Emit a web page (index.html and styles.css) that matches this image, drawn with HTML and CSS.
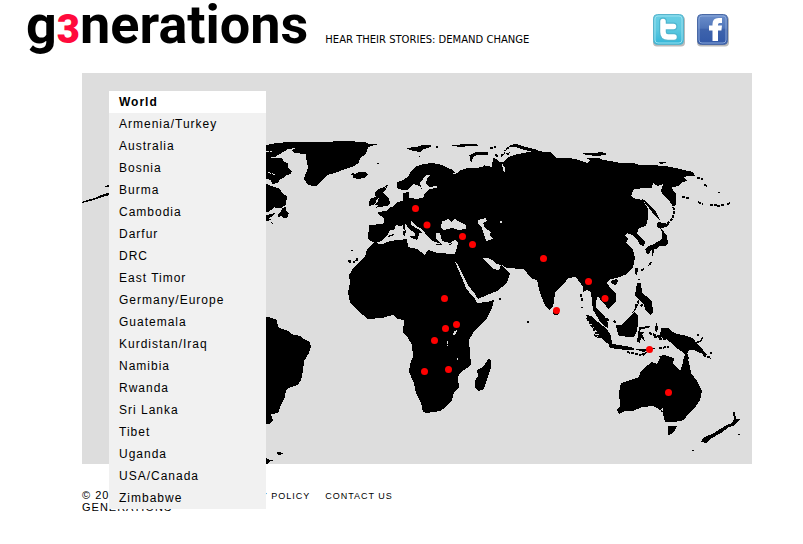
FILE: index.html
```html
<!DOCTYPE html>
<html lang="en">
<head>
<meta charset="utf-8">
<title>g3nerations</title>
<link rel="stylesheet" href="styles.css">
</head>
<body>
<header class="header">
  <h1 class="logo">g<span class="logo-accent">3</span>nerations</h1>
  <p class="tagline">HEAR THEIR STORIES: DEMAND CHANGE</p>
  <div class="social">
    <a href="#" aria-label="Twitter">
      <svg class="social-icon" viewBox="0 0 34 34">
        <defs>
          <linearGradient id="tw" x2="0" y2="1"><stop stop-color="#69cfe5"/><stop offset=".5" stop-color="#5cc9e0"/><stop offset="1" stop-color="#31b5d8"/></linearGradient>
        </defs>
        <rect x="1" y="3" width="32" height="30.500" rx="4" fill="#bbb"/>
        <rect x="1.500" y="1.500" width="30" height="30" rx="4" fill="url(#tw)" stroke="#58b4cc"/>
        <rect x="3" y="3" width="27" height="27" rx="3" fill="none" stroke="#9be0ee"/>
        <path d="M11 8.500v10.500q0 5 5 5h6M11 13.500h10.500" fill="none" stroke="#4fb6cf" stroke-width="8" stroke-linecap="round" stroke-linejoin="round"/>
        <path d="M11 8.500v10.500q0 5 5 5h6M11 13.500h10.500" fill="none" stroke="#fff" stroke-width="5.500" stroke-linecap="round" stroke-linejoin="round"/>
      </svg>
    </a>
    <a href="#" aria-label="Facebook">
      <svg class="social-icon" viewBox="0 0 34 34">
        <defs>
          <linearGradient id="fb" x2="0" y2="1"><stop stop-color="#6c8fcb"/><stop offset=".45" stop-color="#5075b9"/><stop offset=".5" stop-color="#3e63ac"/><stop offset="1" stop-color="#3259a8"/></linearGradient>
        </defs>
        <rect x="1" y="3" width="32" height="30.500" rx="4" fill="#bbb"/>
        <rect x="1.500" y="1.500" width="30" height="30" rx="4" fill="url(#fb)" stroke="#4a69a5"/>
        <rect x="3" y="3" width="27" height="27" rx="3" fill="none" stroke="#8ba8d9"/>
        <path d="M16.500 28V17.500H13V12.500h3.500V11Q16.500 5 22.500 5H26v5h-2.500q-1.500 0-1.500 1.500v1h4l-.6 5H22V28z" fill="#fff"/>
      </svg>
    </a>
  </div>
</header>

<main class="content">
  <svg class="map" viewBox="82 73 670 391" role="img" aria-label="World map">
    <g class="land">
      <!-- Aleutians, Canada and Greenland -->
      <path d="M82 202l8-3 5-1 6-3 9-3v3l-11 3-9 3-8 2zM104 186l6-1v2h-5z"/>
      <path d="M260 145L266 145 276 143 290 142 307 142.500 320 142 345 141 365 142 369 144 378 144 375 145 368 147 366 154 360 158 359 163 354 166 345 169 335 173 327 175 322 181 316 186.500 308 185 304 179 306 173 308 168 306 157 306 154 294 153 292 150 296 148 288 149 280 154 275 157 266 157 260 157z"/>
      <path d="M260 157L282 158 284 162 288 163 288 168 292 171 291 174 286 175 284 178 280 179 278 183 272 184 271 180 266 179 260 179z"/>
      <path d="M260 183L268 184 273 186 280 189 282 193 287 196 286 205 281 208 274 208 268 212 260 213z"/>
      <path d="M278 214l3-2 1-4 4-1 0 4 3 2-2 5-4 0-1-2-4 1zM266 215l9-2-3 4-4 1 4 2-6 1zM271 222l2 1-1 1z"/>
      <path d="M350 174l3-1 2 1 4-2 7 0 2 3-4 3-7 1-6-2 3-1zM377 163h2v1h-2z"/>
      <!-- South America -->
      <path d="M260 315L272 318 277 320 278 327 282 329 289 331 291 334 300 336 304 339 310 342 311 347 309 353 304 361 303 371 301 380 298 385 291 387 286 390 285 397 281 405 278 413 271 414 273 420 270 424 260 424zM276 453l3-1.500 4 2-4 1.800zM260 458l6 0 3 1.500 6 .5-4 1-3 2.500-8 0z"/>
      <!-- Europe, Asia and Africa -->
      <path d="M397 187L397 182 403 180 408 177 411 171 415 167 423 164 433 163 442 165 446 167 453 170 455 173 450 174 455 174 461 170 468 168 478 168 483 165 492 167 493 158 497 159 499 162 503 162 507 158 514 155 523 153 533 151 550 152 554 155 556 158 570 158 579 160 587 163 591 160 597 158 603 160 610 161 620 163 634 163 639 165 650 165 665 166 680 169 693 172 695 176 687 176 684 177 687 181 682 182 679 186 672 187 673 190 676 194 676 205 673 206 670 202 664 196 661 191 663 184 658 186 653 183 652 188 646 188 634 189 631 196 636 199 643 200 648 209 648 218 646 226 639 228 637 234 641 237 645 242 644 246 640 245 637 239 632 235 627 233 625 236 628 239 626 243 633 250 635 258 633 267 627 274 617 278 610 279 607 283 611 289 616 293 616 301 608 309 605 304 601 301 600 298 597 297 596 303 596 308 600 312 605 317 608 323 608 328 604 326 599 320 595 313 593 310 592 302 591 292 587 290 583 292 583 287 576 277 568 278 565 283 555 292 554 302 553 306 550 310 547 308 544 303 540 293 537 280 532 279 527 273 523 269 507 268 502 265 507 271 510 274 507 283 497 291 487 295 478 299 475 294 468 285 463 275 458 265 455 262 462 278 466 288 472 296 475 299 477 303 487 302 494 300 492 308 487 318 475 330 469 340 470 353 471 365 460 373 458 377 459 388 454 392 452 400 445 408 440 411 426 413 423 412 421 403 416 393 414 383 409 372 410 364 413 357 412 345 408 338 403 333 404 320 397 319 393 315 382 318 368 319 357 310 350 302 348 293 350 283 349 275 354 267 365 257 367 249 373 243 383 244 390 241 398 240 407 239 408 247 417 249 425 255 428 250 437 253 455 254 457 248 458 243 455 240 450 243 442 241 440 233 436 233 436 238 438 241 441 244 433 241 428 237 423 230 415 225 411 221 411 225 418 229 423 233 419 233 418 239 416 238 415 233 408 228 406 224 400 226 396 225 394 230 390 230 388 234 385 237 382 241 375 243 371 241 368 239 369 225 382 224 384 222 384 218 378 214 378 212 386 211 389 208 394 206 397 202 403 201 403 193 409 192 409 198 418 199 419 196 424 195 420 186 413 184 407 190 402 190 397 188z"/>
      <!-- British Isles and Mediterranean islands -->
      <path d="M375 192l3-3 6-2 2 2-3 3 2 3 4 4 1 4-3 3-8 1-4 1 4-3-4 0 3-4 1-3-3 1zM370 199l5-2 2 2-2 5-6 2 0-3zM385 187l1-2h2l-1 3zM403 225h2l0 6-2-2zM403 231l3-1-1 6-2-1zM410 236l8 0-1 4-7-3zM388 236l5-2 1 1-6 2zM435 244l7 0-1 1h-5zM448 244l5-1-3 2zM351 250h2v1h-2z"/>
      <path d="M348 261l3 0-1 2M353 262h2M356 261l2-3" class="isle"/>
      <!-- Arctic islands -->
      <path d="M406 148l10-1 7-2 8 0 0 2-7 2-4 3-6-1-4-1zM434 147l4-1v2zM418 156h2v1zM452 145l15-1 9 0 3 2-12 0-5 1-10-1zM509 145l7-1 10 3 12 3-2 2-12-2-8-3-5 0zM582 153l13 0 6-1 7 2-10 2-12-1zM586 158l10 0 7 1-8 3zM659 162l6 0 1 1-6 1zM505 154l5-2-1 3zM504 150h2v1h-2z"/>
      <path d="M481 164l-9-3-1-5 7-3 10 0" class="chain"/>
      <path d="M490 148l6-1M495 155l3 1M506 149l5-3M501 156l4-3M494 170l9 2 1-3" class="isle"/>
      <path d="M697 178l6 1M704 185l4 1M682 197l7 1M698 202l5 2M710 205l7 0M717 206l7-1M727 204l4-1M719 192v1" class="isle"/>
      <!-- Kuriles, Sakhalin and Japan -->
      <path d="M673 203l1 10-2 6-6 6" class="isle"/>
      <path d="M642 199l4 2 10 11 4 8-4-3-7-9zM658 222l5 1 6 1-3 3-4 1-4 0-1-3zM660 228l4 4 3 4 1 7-2 3-6 0-4 3-5 1-1 3-3 1-2-5 3-3 6-2 5-3 3-3 0-6zM652 250h2l-1 6h-1zM635 268l3 0-1 8-2-3zM611 281l5-2 2 2-2 4-4-1z"/>
      <path d="M651 262l-2 4M641 270l4-1" class="isle"/>
      <!-- South-east Asia -->
      <path d="M637 283l4 0 1 10 4 3 6 5 1 12-3 2-4-4-2-6-5-5-4-5zM632 313l5-8 3-4-4 8zM616 325l6 0 3-4 5-4 4-5 4 3 0 8-1 8-3 6-3 0-12-1-2-5z"/>
      <path d="M586 315l5 1 7 6 9 7 4 7 1 8-6-1-7-8-7-10zM608 343l10 2 8 1 8 2 0 2-8 0-16-2zM634 349l12 0 10-1-2 1-11 3zM640 354l7-2-3 4zM639 327l12-1-3 2-7 1-1 3 5 0-3 2 4 9-5-5-1 5-3-1zM656 322l2 5-1 6-2-3zM661 328l7 0 3 3 6 3 6 1 10 3 4 6 6 6 4 5-7-2-6-3-5 0-3 6-5-5-6-4-5-5-4-3-6-2zM693 342l7-1 2-4 1 1-2 4-7 2zM658 356l7-1 4 2 5 3-12-1zM685 356l2-4 2 7z"/>
      <path d="M581 294l1 8M582 307v1M587 318l11 18M594 335l7 3M606 319l3 1M614 321l2 2M639 279v1M641 297l-6 10M645 301l-5 6M649 333l12 4M666 339l-8 0M659 348l10-1M627 352l14 3M697 335h2M703 355l8 3M711 352v2M654 337l8 0M527 322h2M499 299h2" class="isle"/>
      <ellipse cx="556" cy="312" rx="3" ry="3.500"/>
      <path d="M489 358l2 3 0 7-3 9-4 12-5 2-4-3 0-7 3-5-1-6 6-3z"/>
      <!-- Australia and New Zealand -->
      <path d="M621 383L630 380 639 377 641 371 648 365 652 362 657 364 660 358 667 356 674 358 673 364 680 371 682 366 684 357 686 353 689 362 691 373 697 381 702 391 700 400 694 409 688 414 684 420 674 422 665 422 663 414 657 408 653 406 642 407 633 411 625 411 619 414 617 410 620 406 619 392zM668 426l9 0-2 4-4 4-3 1zM733 412l2 0 1 7 4 0-5 6-6 2-8 6-9 5-6 5-5-1 2-4 11-5 11-7 7-3 2-4zM738 434h2v1h-2zM692 450h2v1h-2z"/>
    </g>
    <!-- Inland seas, lakes and gulfs -->
    <path class="sea" d="M426 175h4l-3 4-1 4 3 4 8-1v2l-8 1-4 4-2 5-9 1-1-3 9-6-2-7zM447 219l3 1 1 2 4-3 3 2 8 4 0 4-8 1-6-2-8 2-3-2 1-7 5-1zM478 220l8-2 1 3-4 2 2 5 6 4-1 3 3 4-7 2-2-7-2-6-4-4zM500 221h2v2h-2zM502 163l3 5 0 5-2-3zM483 158l2 3-5 1 4 4-3 1-9-4 0-4zM454 331l3-1-1 4-3 1zM483 258l5 0 4 2 4 4 5 1-2 5-6-1-6-6z"/>
    <path class="lake" d="M447 341l1 5M457 358l1 2M660 412l2-4 0 6M266 151h6M268 172l7 3M266 183l9 4M275 207l-7 8M455 173l3-1"/>
    <g class="pins">
      <circle cx="415.500" cy="208.500" r="3.500"/><circle cx="427" cy="225" r="3.500"/>
      <circle cx="462.500" cy="236.500" r="3.500"/><circle cx="472.500" cy="244.500" r="3.500"/>
      <circle cx="543.500" cy="258.500" r="3.500"/><circle cx="588.500" cy="281.500" r="3.500"/>
      <circle cx="605" cy="298.500" r="3.500"/><circle cx="556.500" cy="310.500" r="3.500"/>
      <circle cx="444.500" cy="298.500" r="3.500"/><circle cx="445.500" cy="328.500" r="3.500"/>
      <circle cx="456.500" cy="324.500" r="3.500"/><circle cx="434.500" cy="340.500" r="3.500"/>
      <circle cx="424.500" cy="371.500" r="3.500"/><circle cx="448.500" cy="369.500" r="3.500"/>
      <circle cx="649.500" cy="349.500" r="3.500"/><circle cx="668.500" cy="392.500" r="3.500"/>
    </g>
  </svg>

  <nav class="menu" aria-label="Regions">
    <a class="menu-item current" href="#">World</a>
    <a class="menu-item" href="#">Armenia/Turkey</a>
    <a class="menu-item" href="#">Australia</a>
    <a class="menu-item" href="#">Bosnia</a>
    <a class="menu-item" href="#">Burma</a>
    <a class="menu-item" href="#">Cambodia</a>
    <a class="menu-item" href="#">Darfur</a>
    <a class="menu-item" href="#">DRC</a>
    <a class="menu-item" href="#">East Timor</a>
    <a class="menu-item" href="#">Germany/Europe</a>
    <a class="menu-item" href="#">Guatemala</a>
    <a class="menu-item" href="#">Kurdistan/Iraq</a>
    <a class="menu-item" href="#">Namibia</a>
    <a class="menu-item" href="#">Rwanda</a>
    <a class="menu-item" href="#">Sri Lanka</a>
    <a class="menu-item" href="#">Tibet</a>
    <a class="menu-item" href="#">Uganda</a>
    <a class="menu-item" href="#">USA/Canada</a>
    <a class="menu-item" href="#">Zimbabwe</a>
  </nav>

  <footer class="footer">
    <p class="copyright">© 2010 GENERATIONS</p>
    <a class="footer-link" href="#">PRIVACY POLICY</a>
    <a class="footer-link" href="#">CONTACT US</a>
  </footer>
</main>
</body>
</html>
```
FILE: styles.css
```css
* { box-sizing: border-box; }

body {
  margin: 0;
  background: #fff;
  color: #000;
  font-family: "Liberation Sans", Arial, sans-serif;
}

a { color: inherit; text-decoration: none; }

.header {
  display: flex;
  align-items: baseline;
  height: 73px;
  padding: 0 73px 0 26px;
}

.logo {
  margin: 0 17px 0 0;
  font-family: Roboto, sans-serif;
  font-size: 54px;
  line-height: 50px;
  font-weight: 700;
}

.logo-accent { color: #ff0a3c; font-size: 40px; font-weight: 900; }

.tagline {
  margin: 0;
  font-family: "DejaVu Sans", Verdana, sans-serif;
  font-size: 10px;
  line-height: 14px;
  white-space: nowrap;
}

.social {
  display: flex;
  gap: 10px;
  align-self: flex-start;
  margin-left: auto;
  padding-top: 13px;
}

.social-icon { display: block; width: 34px; height: 34px; }

.content {
  position: relative;
  margin: 0 51px 0 82px;
}

.map {
  display: block;
  width: 100%;
  background: #ddd;
  shape-rendering: crispEdges;
}

.land .isle { fill: none; stroke: #000; stroke-width: 2; stroke-dasharray: 3 1; }
.land .chain { fill: none; stroke: #000; stroke-width: 3; }
.sea { fill: #ddd; }
.lake { fill: none; stroke: #ddd; stroke-dasharray: 3 1; }
.pins { fill: #f00; shape-rendering: auto; }

.menu {
  position: absolute;
  top: 18px;
  left: 27px;
  width: 157px;
  background: #f1f1f1;
}

.menu-item {
  display: block;
  padding-left: 10px;
  font-size: 12px;
  line-height: 22px;
  letter-spacing: 1px;
}

.current { background: #fff; font-weight: 700; }

.footer {
  display: flex;
  align-items: baseline;
  gap: 15px;
  padding: 25px 0;
  letter-spacing: 1px;
}

.copyright {
  width: 125px;
  margin: 0;
  font-size: 11px;
  line-height: 12px;
}

.footer-link { font-size: 9px; line-height: 12px; }
```
